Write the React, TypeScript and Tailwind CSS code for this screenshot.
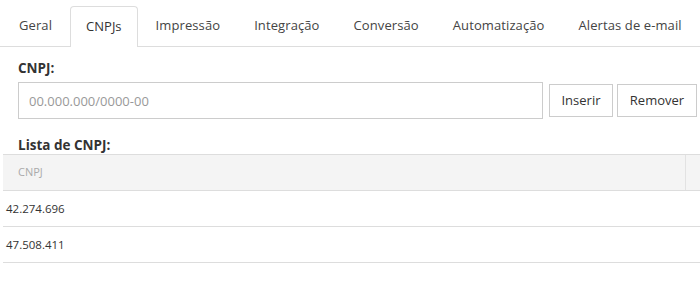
const tabs = ['Geral', 'CNPJs', 'Impressão', 'Integração', 'Conversão', 'Automatização', 'Alertas de e-mail']

const rows = ['42.274.696', '47.508.411']

export default function App() {
  return (
    <div className="h-[298px] w-[700px] overflow-hidden bg-white text-[#333] [font-family:'Open_Sans',sans-serif]">
      {/* tabs */}
      <ul className="flex border-b border-[#dddddd] pl-[3px] pt-[6px]">
        {tabs.map((tab) => {
          const active = tab === 'CNPJs'
          return (
            <li
              key={tab}
              className={
                active
                  ? '-mb-px mr-[2px] flex h-[41px] shrink-0 items-center whitespace-nowrap rounded-t-[4px] border border-b-0 border-[#dddddd] bg-white px-[15px] text-[13px] text-[#333]'
                  : 'mr-[2px] flex h-[40px] shrink-0 items-center whitespace-nowrap px-4 text-[13px] tracking-[0.1px] text-[#444]'
              }
            >
              {tab}
            </li>
          )
        })}
      </ul>

      <div className="pl-[18px] pr-[3px]">
        <p className="mt-[11px] text-[13.5px] font-bold leading-[20px]">CNPJ:</p>
        <div className="mt-[4px] flex items-center">
          <input
            className="h-[37px] w-[525px] border border-[#cccccc] px-[10px] text-[13px] outline-none placeholder:text-[#999]"
            placeholder="00.000.000/0000-00"
          />
          <button className="ml-[6px] h-[33px] w-[64px] border border-[#cccccc] bg-white text-[13px] text-[#333]">
            Inserir
          </button>
          <button className="ml-[4px] h-[33px] w-[80px] border border-[#cccccc] bg-white text-[13px] text-[#333]">
            Remover
          </button>
        </div>
        <p className="mt-[16px] text-[13.5px] font-bold leading-[20px]">Lista de CNPJ:</p>
      </div>

      {/* table */}
      <div className="ml-[3px] -mt-px">
        <div className="flex h-[37px] border-y border-[#dddddd] bg-[#f4f4f4]">
          <div className="flex flex-1 items-center pl-[15px] text-[11px] text-[#aaa]">CNPJ</div>
          <div className="w-[15px] border-l border-[#e2e2e2]" />
        </div>
        {rows.map((r) => (
          <div
            key={r}
            className="flex h-[36px] items-center border-b border-[#dddddd] pl-[3px] text-[11.5px] text-[#333]"
          >
            {r}
          </div>
        ))}
      </div>
    </div>
  )
}
